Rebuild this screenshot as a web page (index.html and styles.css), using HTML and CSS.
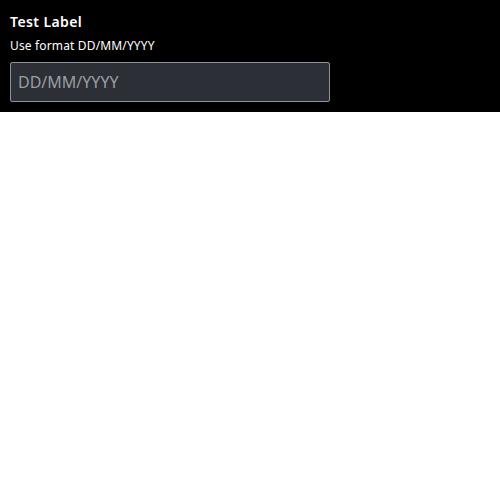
FILE: index.html
```html
<!DOCTYPE html>
<html>
<head>
<meta charset="utf-8">
<link rel="stylesheet" href="styles.css">
</head>
<body>
<div class="field">
  <label class="label" for="date">Test Label</label>
  <div class="hint">Use format DD/MM/YYYY</div>
  <input class="input" id="date" type="text" placeholder="DD/MM/YYYY">
</div>
</body>
</html>
```
FILE: styles.css
```css
html, body {
  margin: 0;
  padding: 0;
  background: #fff;
}
.field {
  background: #000;
  padding: 11px 10px 10px 10px;
  display: flex;
  flex-direction: column;
  align-items: flex-start;
  font-family: "Noto Sans", sans-serif;
  color: #fff;
}
.label {
  font-size: 14px;
  font-weight: 600;
  line-height: 22px;
  letter-spacing: 0.4px;
}
.hint {
  font-size: 12px;
  line-height: 18px;
  margin-top: 4px;
  letter-spacing: 0.15px;
}
.input {
  box-sizing: border-box;
  margin-top: 7px;
  width: 320px;
  height: 40px;
  padding: 0 7px;
  background: #2c2f35;
  border: 1px solid #8d939b;
  border-radius: 2px;
  font-family: "Noto Sans", sans-serif;
  font-size: 16px;
  color: #fff;
  outline: none;
}
.input::placeholder {
  color: #9a9ea4;
}
```
